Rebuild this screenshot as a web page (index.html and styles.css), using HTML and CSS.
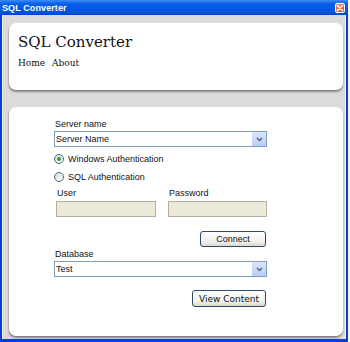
FILE: index.html
```html
<!DOCTYPE html>
<html lang="en">

<head>
    <meta charset="UTF-8">
    <meta name="viewport" content="width=device-width, initial-scale=1.0">
    <title>SQL Converter</title>
    <link rel="stylesheet" href="styles.css">
</head>

<body>
    <div class="window">
        <div class="titlebar">
            <span class="title">SQL Converter</span>
            <span class="close">
                <svg width="8" height="8" viewBox="0 0 8 8">
                    <path d="M1.5 1.5 L6.5 6.5 M6.5 1.5 L1.5 6.5" stroke="#fff" stroke-width="1.6" stroke-linecap="round" />
                </svg>
            </span>
        </div>
        <div class="client">
            <div class="card header">
                <h1>SQL Converter</h1>
                <div class="nav">
                    <a href="#">Home</a>
                    <a href="#">About</a>
                </div>
            </div>
            <div class="card body">
                <div class="form">
                    <label class="label">Server name</label>
                    <div class="select">
                        <span>Server Name</span>
                        <span class="drop">
                            <svg width="7" height="5" viewBox="0 0 7 5">
                                <path d="M1 1 L3.5 3.5 L6 1" fill="none" stroke="#4d6185" stroke-width="1.4" />
                            </svg>
                        </span>
                    </div>
                    <div class="radio-row">
                        <span class="radio checked"></span>
                        <span>Windows Authentication</span>
                    </div>
                    <div class="radio-row">
                        <span class="radio"></span>
                        <span>SQL Authentication</span>
                    </div>
                    <div class="creds">
                        <div class="field user">
                            <label class="label">User</label>
                            <div class="textbox"></div>
                        </div>
                        <div class="field pass">
                            <label class="label">Password</label>
                            <div class="textbox"></div>
                        </div>
                    </div>
                    <div class="actions">
                        <button class="btn connect">Connect</button>
                    </div>
                    <label class="label db">Database</label>
                    <div class="select">
                        <span>Test</span>
                        <span class="drop">
                            <svg width="7" height="5" viewBox="0 0 7 5">
                                <path d="M1 1 L3.5 3.5 L6 1" fill="none" stroke="#4d6185" stroke-width="1.4" />
                            </svg>
                        </span>
                    </div>
                    <div class="actions view">
                        <button class="btn wide">View Content</button>
                    </div>
                </div>
            </div>
        </div>
    </div>
</body>

</html>
```

FILE: styles.css
```css
body {
    margin: 0;
    padding: 0;
    background-color: #f4f4f4;
    font-family: "Liberation Sans", Arial, sans-serif;
}

.window {
    width: 348px;
    height: 342px;
    box-sizing: border-box;
    border-left: 2px solid #0b3ed6;
    border-right: 2px solid #0b3ed6;
    border-bottom: 3px solid #0b3ed6;
    display: flex;
    flex-direction: column;
}

.titlebar {
    height: 15px;
    background: linear-gradient(#3b8cf6 0, #0a5fe8 25%, #0056e0 75%, #0048cc 100%);
    display: flex;
    align-items: center;
    justify-content: space-between;
    margin-left: -2px;
    margin-right: -2px;
    padding: 0 3px 0 2px;
}

.title {
    color: white;
    font-weight: bold;
    font-size: 9px;
    letter-spacing: 0.1px;
}

.close {
    width: 10px;
    height: 10px;
    box-sizing: border-box;
    border: 1px solid #fff;
    border-radius: 2px;
    background: linear-gradient(135deg, #f08a68, #d9481f);
    display: flex;
    align-items: center;
    justify-content: center;
}

.client {
    flex: 1;
    background-color: #dbdbdb;
    box-shadow: inset 1px 0 #f0f0f0, inset -1px 0 #f0f0f0;
    padding: 8px 3px 3px 7px;
    display: flex;
    flex-direction: column;
}

.card {
    background-color: white;
    border-radius: 7px;
    box-shadow: 0 2px 2px rgba(0, 0, 0, 0.35), -1px 1px 1px rgba(0, 0, 0, 0.12);
}

.header {
    height: 67px;
    box-sizing: border-box;
    padding: 10px 9px 0 9px;
}

h1 {
    margin: 0;
    font-family: "DejaVu Serif", serif;
    font-weight: normal;
    font-size: 15px;
    line-height: 18px;
    color: #111;
}

.nav {
    margin-top: 6px;
    font-family: "DejaVu Serif", serif;
    font-size: 9px;
    line-height: 12px;
}

.nav a {
    color: #111;
    text-decoration: none;
    margin-right: 4px;
}

.body {
    flex: 1;
    margin-top: 17px;
    padding: 12px 0 0 45px;
}

.form {
    width: 213px;
    font-size: 9px;
    color: #111;
}

.label {
    display: block;
    line-height: 11px;
    margin: 0 0 1px 1px;
}

.select {
    height: 16px;
    box-sizing: border-box;
    border: 1px solid #7f9db9;
    display: flex;
    align-items: center;
    justify-content: space-between;
    padding-left: 1px;
}

.drop {
    width: 14px;
    height: 14px;
    background: linear-gradient(#dce6fd, #b9cdf8);
    display: flex;
    align-items: center;
    justify-content: center;
}

.radio-row {
    display: flex;
    align-items: center;
    gap: 4px;
    height: 12px;
    margin-top: 6px;
    font-size: 9px;
}

.radio {
    width: 10px;
    height: 10px;
    box-sizing: border-box;
    border: 1px solid #3f6b8f;
    border-radius: 50%;
    background: linear-gradient(135deg, #dcdcd6, #ffffff);
    display: flex;
    align-items: center;
    justify-content: center;
}

.radio.checked::after {
    content: "";
    width: 4px;
    height: 4px;
    border-radius: 50%;
    background-color: #2aa32a;
}

.creds {
    display: flex;
    gap: 12px;
    margin-top: 5px;
    padding-left: 2px;
}

.field.user {
    width: 100px;
}

.field.pass {
    width: 99px;
}

.field .label {
    margin-bottom: 2px;
}

.textbox {
    height: 16px;
    box-sizing: border-box;
    border: 1px solid #b3b09f;
    background-color: #ece9d8;
}

.actions {
    display: flex;
    justify-content: flex-end;
    margin-top: 14px;
    padding-right: 1px;
}

.btn {
    height: 16px;
    width: 66px;
    box-sizing: border-box;
    border: 1px solid #2d4a6b;
    border-radius: 3px;
    background: linear-gradient(#ffffff, #f1f0ea 70%, #dcd9cb);
    font-family: "Liberation Sans", Arial, sans-serif;
    font-size: 9px;
    color: #111;
    padding: 0;
}

.btn.wide {
    width: 74px;
    height: 17px;
    font-family: "DejaVu Sans", sans-serif;
}

.label.db {
    margin-top: 2px;
}

.actions.view {
    margin-top: 13px;
}
```
